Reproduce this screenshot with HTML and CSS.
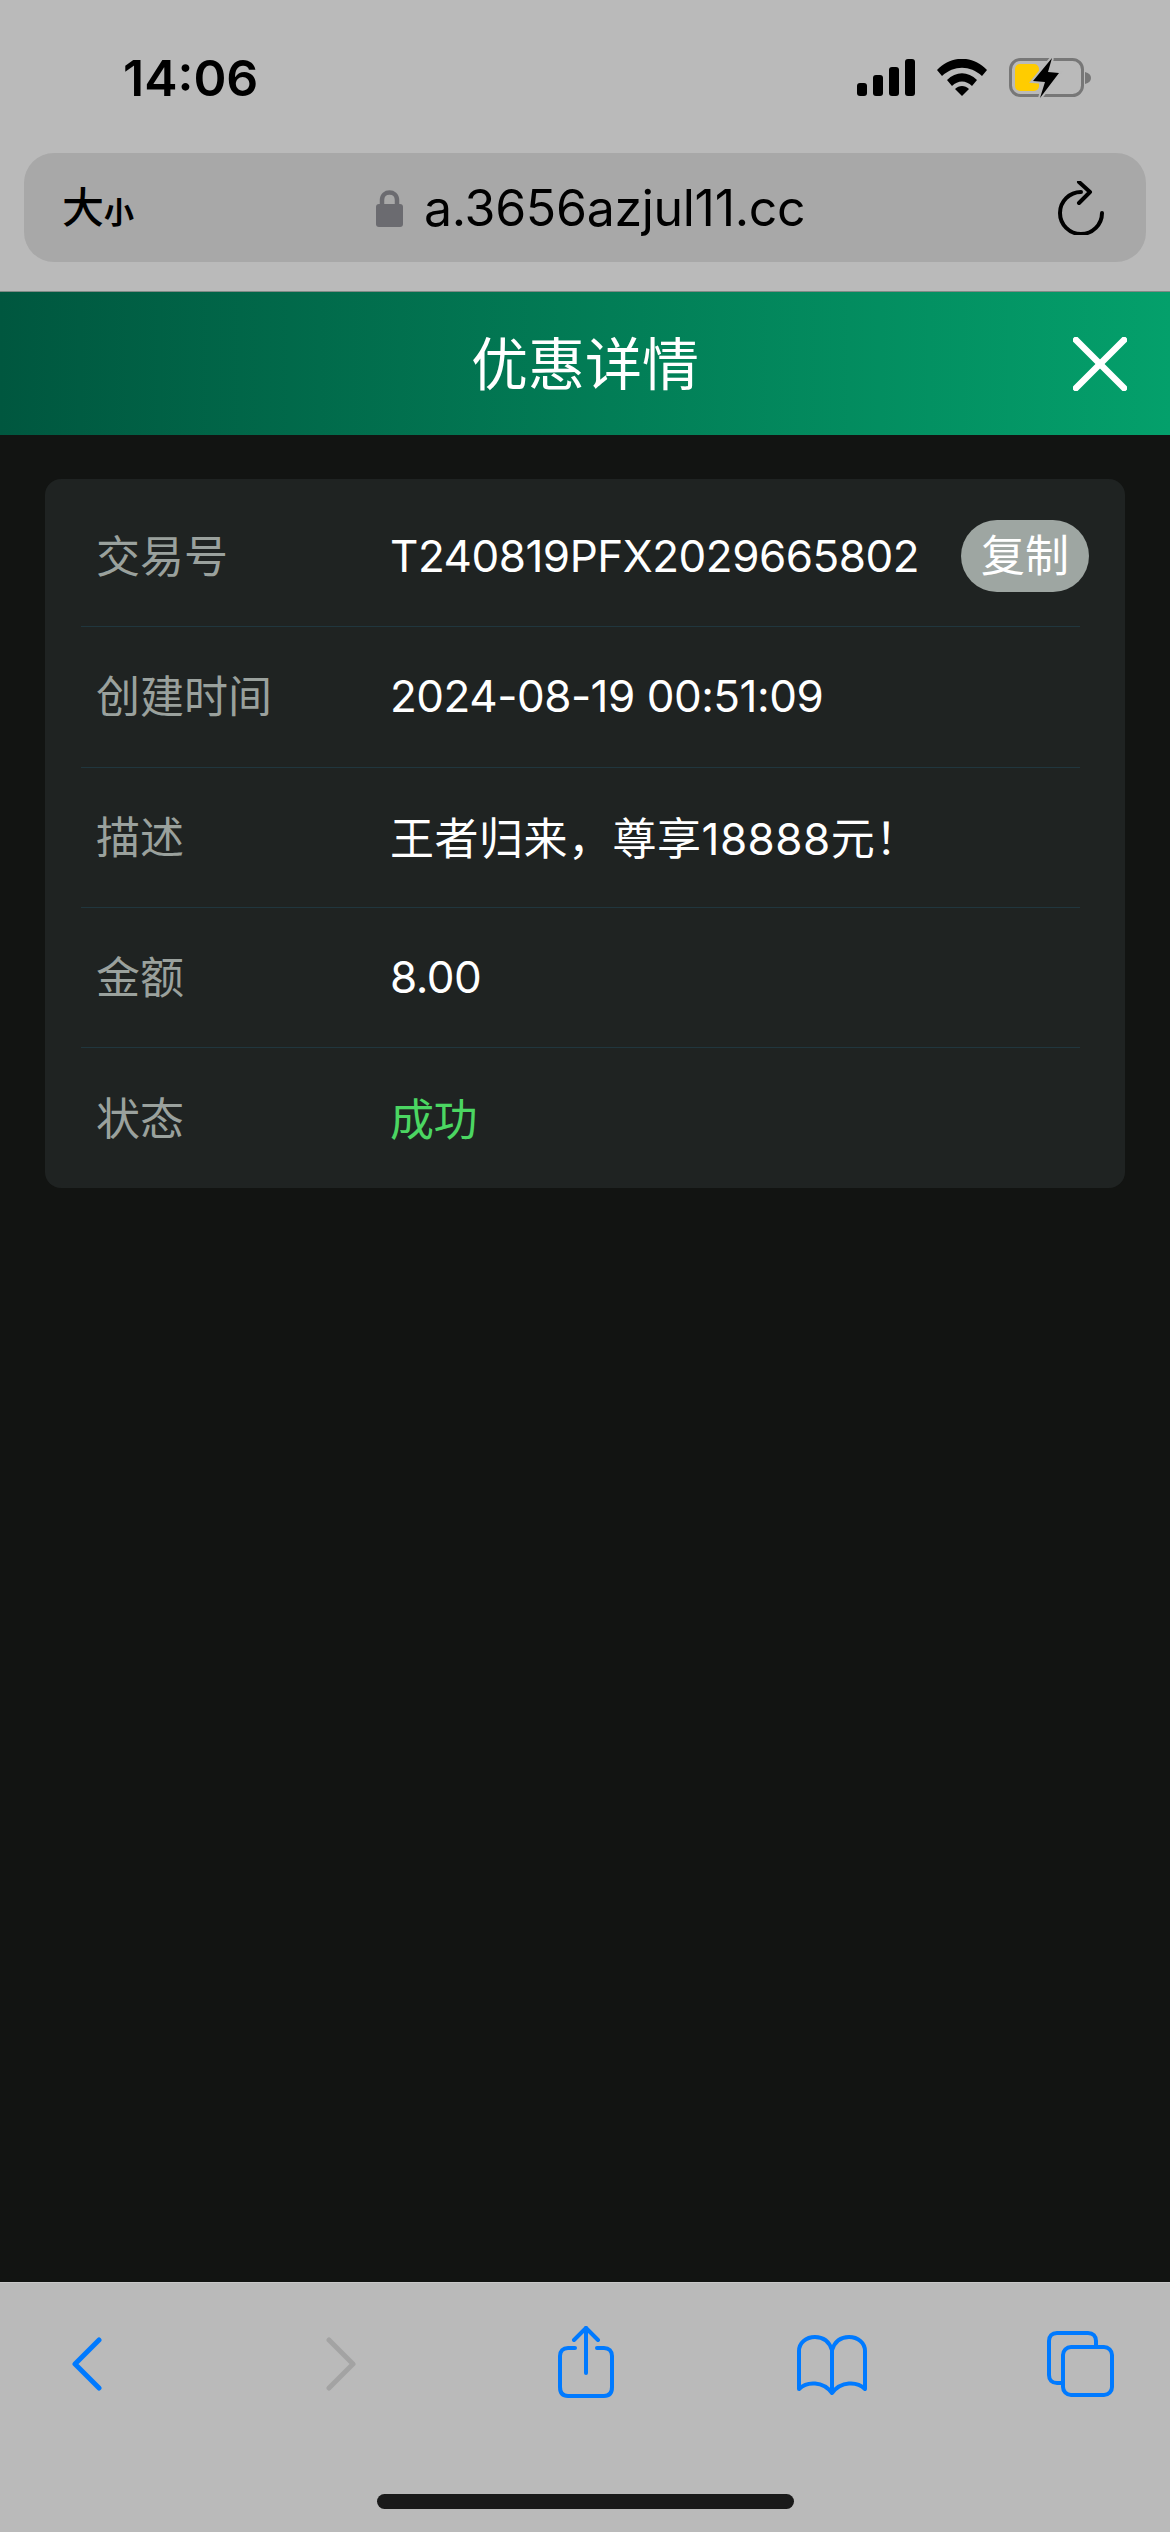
FILE: index.html
```html
<!DOCTYPE html>
<html lang="zh-CN">
<head>
    <meta charset="UTF-8">
    <meta name="viewport" content="width=device-width, initial-scale=1.0">
    <title>优惠详情</title>
    <link rel="stylesheet" href="styles.css">
</head>
<body>
    <div class="browser-top">
        <div class="status-bar">
            <span class="clock">14:06</span>
            <div class="status-icons">
                <svg class="signal" width="58" height="37" viewBox="0 0 58 37" fill="#000">
                    <rect x="0" y="24" width="10" height="13" rx="3"/>
                    <rect x="16" y="16" width="10" height="21" rx="3"/>
                    <rect x="32" y="8" width="10" height="29" rx="3"/>
                    <rect x="48" y="0" width="10" height="37" rx="3"/>
                </svg>
                <svg class="wifi" width="50" height="37" viewBox="0 0 50 37" fill="#000">
                    <path d="M0 11 C14 -4 36 -4 50 11 L45 17 C33 6 17 6 5 17 Z"/>
                    <path d="M10 21 C19 12 31 12 40 21 L35 27 C29 21 21 21 15 27 Z"/>
                    <path d="M18 30 C22 26 28 26 32 30 L25 37 Z"/>
                </svg>
                <svg class="battery" width="82" height="42" viewBox="0 0 82 42">
                    <rect x="1.5" y="2.5" width="72" height="36" rx="10" fill="none" stroke="#777" stroke-width="3"/>
                    <path d="M76 15 C80 16 82 18 82 21 C82 24 80 26 76 27 Z" fill="#777"/>
                    <rect x="6" y="7" width="24" height="27" rx="5" fill="#fc0"/>
                    <path d="M43 1 L24 24 L36 25 L31 41 L50 16 L39 15 Z" fill="#000" stroke="#b9b9b9" stroke-width="4" paint-order="stroke"/>
                </svg>
            </div>
        </div>
        <div class="address-bar">
            <div class="text-size"><span class="big">大</span><span class="small">小</span></div>
            <div class="site">
                <svg class="lock" width="27" height="39" viewBox="0 0 27 39">
                    <path d="M6 18 V12 C6 2 21 2 21 12 V18" fill="none" stroke="#6b6b70" stroke-width="4.5"/>
                    <rect x="0" y="16" width="27" height="23" rx="3" fill="#6b6b70"/>
                </svg>
                <span class="url">a.3656azjul11.cc</span>
            </div>
            <svg class="reload" width="46" height="54" viewBox="0 0 46 54" fill="none" stroke="#000" stroke-width="4" stroke-linecap="round" stroke-linejoin="round">
                <path d="M44 32 A21 21 0 1 1 23 11"/>
                <path d="M21 1 L32 11 L21 22"/>
            </svg>
        </div>
    </div>

    <div class="page-header">
        <h1 class="page-title">优惠详情</h1>
        <svg class="close-icon" width="54" height="54" viewBox="0 0 54 54" stroke="#fff" stroke-width="6.5" stroke-linecap="round">
            <path d="M3 3 L51 51"/>
            <path d="M51 3 L3 51"/>
        </svg>
    </div>

    <div class="content">
        <div class="detail-card">
            <div class="detail-row">
                <span class="detail-label">交易号</span>
                <span class="detail-value">T240819PFX2029665802</span>
                <button class="copy-btn">复制</button>
            </div>
            <div class="detail-row">
                <span class="detail-label">创建时间</span>
                <span class="detail-value">2024-08-19 00:51:09</span>
            </div>
            <div class="detail-row">
                <span class="detail-label">描述</span>
                <span class="detail-value desc">王者归来，尊享18888元！</span>
            </div>
            <div class="detail-row">
                <span class="detail-label">金额</span>
                <span class="detail-value">8.00</span>
            </div>
            <div class="detail-row">
                <span class="detail-label">状态</span>
                <span class="detail-value success">成功</span>
            </div>
        </div>
    </div>

    <div class="browser-bottom">
        <div class="toolbar">
            <svg class="nav-icon" width="30" height="54" viewBox="0 0 30 54" fill="none" stroke="#007aff" stroke-width="5" stroke-linecap="round" stroke-linejoin="round">
                <path d="M27 3 L3 27 L27 51"/>
            </svg>
            <svg class="nav-icon" width="30" height="54" viewBox="0 0 30 54" fill="none" stroke="#a3a3a3" stroke-width="5" stroke-linecap="round" stroke-linejoin="round">
                <path d="M3 3 L27 27 L3 51"/>
            </svg>
            <svg class="share" width="56" height="72" viewBox="0 0 56 72" fill="none" stroke="#007aff" stroke-width="4" stroke-linecap="round" stroke-linejoin="round">
                <path d="M17 22 H10 C5 22 2 25 2 30 V61 C2 67 5 70 10 70 H46 C51 70 54 67 54 61 V30 C54 25 51 22 46 22 H39"/>
                <path d="M28 47 V2"/>
                <path d="M16 14 L28 2 L40 14"/>
            </svg>
            <svg class="book" width="70" height="60" viewBox="0 0 70 60" fill="none" stroke="#007aff" stroke-width="4" stroke-linecap="round" stroke-linejoin="round">
                <path d="M35 15 C32 6 26 2 18 2 C9 2 2 8 2 16 V54 C10 46 26 46 35 58 C44 46 60 46 68 54 V16 C68 8 61 2 52 2 C44 2 38 6 35 15 Z"/>
                <path d="M35 15 V56"/>
            </svg>
            <svg class="tabs" width="67" height="66" viewBox="0 0 67 66" fill="none" stroke="#007aff" stroke-width="4" stroke-linejoin="round">
                <path d="M15 52 H10 C5 52 2 49 2 44 V10 C2 5 5 2 10 2 H41 C46 2 49 5 49 10 V16"/>
                <rect x="16" y="16" width="49" height="48" rx="8"/>
            </svg>
        </div>
        <div class="home-indicator"></div>
    </div>
</body>
</html>
```

FILE: styles.css
```css
* {
    margin: 0;
    padding: 0;
    box-sizing: border-box;
    font-family: 'Inter', 'Noto Sans CJK SC', sans-serif;
}
body {
    width: 1170px;
    height: 2532px;
    background: #121412;
    display: flex;
    flex-direction: column;
    overflow: hidden;
}
.browser-top {
    height: 292px;
    background: #bababa;
    border-bottom: 1px solid #7f8a85;
}
.status-bar {
    height: 153px;
    padding: 57px 79px 0 123px;
    display: flex;
    justify-content: space-between;
}
.clock {
    font-size: 50px;
    font-weight: 600;
    line-height: 42px;
    color: #000;
}
.status-icons {
    display: flex;
    align-items: flex-start;
    gap: 22px;
}
.wifi {
    margin-top: 2px;
}
.signal {
    margin-top: 2px;
}
.address-bar {
    margin: 0 24px;
    height: 109px;
    background: #a8a8a8;
    border-radius: 30px;
    display: flex;
    align-items: center;
    padding: 0 42px 0 38px;
}
.text-size {
    display: flex;
    align-items: flex-end;
    color: #000;
}
.text-size .big {
    font-size: 42px;
    font-weight: 500;
    line-height: 48px;
}
.text-size .small {
    font-size: 30px;
    font-weight: 700;
    line-height: 40px;
}
.site {
    display: flex;
    align-items: center;
    gap: 21px;
    margin-left: 242px;
}
.url {
    font-size: 50px;
    letter-spacing: -0.3px;
    color: #000;
    line-height: 60px;
}
.reload {
    margin-left: auto;
}
.page-header {
    height: 143px;
    background: linear-gradient(90deg, #00573f 0%, #04a06b 100%);
    display: flex;
    align-items: center;
    justify-content: center;
    position: relative;
}
.page-title {
    font-size: 57px;
    font-weight: 400;
    color: #fff;
    padding-bottom: 8px;
}
.close-icon {
    position: absolute;
    right: 43px;
    top: 45px;
}
.content {
    flex: 1;
    padding: 44px 45px;
}
.detail-card {
    background: #1f2322;
    border-radius: 16px;
    padding: 8px 45px 0 36px;
}
.detail-row {
    height: 140.3px;
    display: flex;
    align-items: center;
    padding-left: 15px;
    border-bottom: 1px solid #20363e;
}
.detail-row:last-child {
    border-bottom: none;
}
.detail-label {
    width: 294px;
    font-size: 44px;
    color: #9aa19d;
    padding-bottom: 5px;
}
.detail-value {
    font-size: 44px;
    letter-spacing: -0.5px;
    color: #fff;
    padding-bottom: 2px;
}
.detail-value.desc {
    letter-spacing: 0.5px;
}
.detail-value.success {
    color: #4bd662;
}
.copy-btn {
    margin-left: auto;
    margin-right: -9px;
    margin-bottom: 2px;
    width: 128px;
    height: 72px;
    border: none;
    border-radius: 36px;
    background: #9ea6a2;
    color: #fff;
    font-size: 44px;
    padding-bottom: 6px;
}
.browser-bottom {
    height: 250px;
    background: #bababa;
    border-top: 1px solid #c9c9c9;
}
.toolbar {
    height: 211px;
    padding: 43px 0 0 72px;
    display: grid;
    grid-template-columns: 254px 232px 239px 250px auto;
    align-items: start;
}
.nav-icon {
    margin-top: 11px;
}
.book {
    margin-top: 9px;
}
.tabs {
    margin-top: 5px;
}
.home-indicator {
    width: 417px;
    height: 15px;
    margin: 0 auto;
    border-radius: 8px;
    background: #1a1a1a;
}
```
